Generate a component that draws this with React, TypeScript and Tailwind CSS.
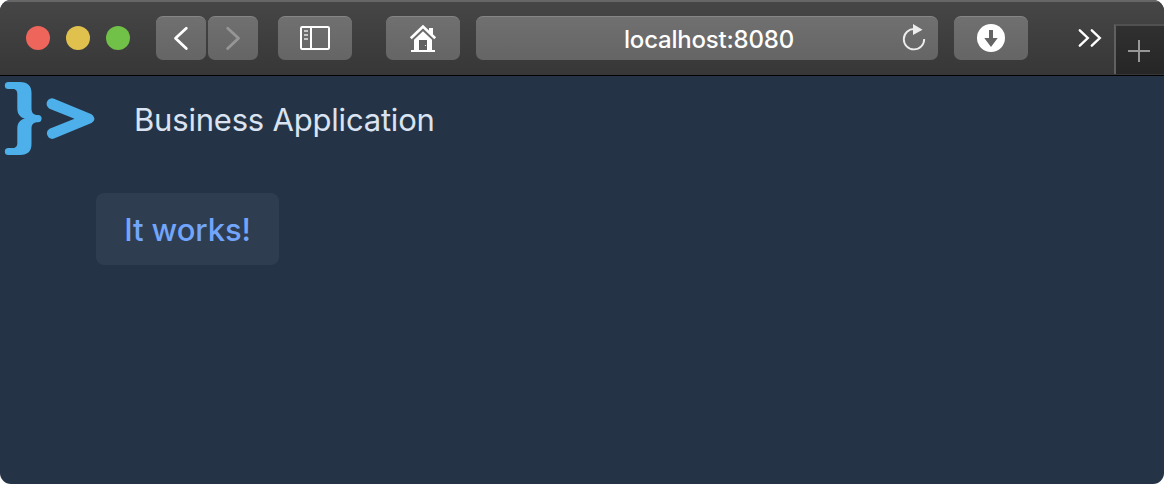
import type { ReactNode } from "react";

function ToolButton({ className, label, children }: { className: string; label: string; children: ReactNode }) {
  return (
    <button
      aria-label={label}
      className={`flex h-11 shrink-0 items-center justify-center rounded-[7px] border-t border-[#858585] bg-linear-to-b from-[#707070] to-[#656565] ${className}`}
    >
      {children}
    </button>
  );
}

function Toolbar() {
  return (
    <header className="flex h-[76px] shrink-0 items-start border-t-2 border-b border-t-[#676767] border-b-black bg-linear-to-b from-[#464646] to-[#373737]">
      <div className="mt-6 ml-[26px] flex gap-4">
        <span className="size-6 rounded-full bg-[#ee655b]" />
        <span className="size-6 rounded-full bg-[#e1c14d]" />
        <span className="size-6 rounded-full bg-[#71c048]" />
      </div>
      <div className="mt-3.5 ml-[26px] flex gap-0.5">
        <ToolButton label="Back" className="w-[50px]">
          <svg width="50" height="43" viewBox="0 0 50 43" fill="none" stroke="#fff" strokeWidth="2.8" strokeLinecap="round" strokeLinejoin="round">
            <path d="M30.3 11.2 19.5 21.200l10.800 10.300" />
          </svg>
        </ToolButton>
        <ToolButton label="Forward" className="w-[50px]">
          <svg width="50" height="43" viewBox="0 0 50 43" fill="none" stroke="#969696" strokeWidth="2.8" strokeLinecap="round" strokeLinejoin="round">
            <path d="m19.700 11.200 10.800 10-10.800 10.300" />
          </svg>
        </ToolButton>
      </div>
      <ToolButton label="Sidebar" className="mt-3.5 ml-5 w-[74px]">
        <svg width="74" height="43" viewBox="0 0 74 43" fill="none" stroke="#fff" strokeWidth="2">
          <rect x="23" y="10" width="28" height="22" rx="1.2" />
          <path d="M33 10v22" />
          <path d="M26 14h4M26 18h4M26 22h4" stroke="#c8c8c8" strokeWidth="1.8" />
        </svg>
      </ToolButton>
      <ToolButton label="Home" className="mt-3.5 ml-[34px] w-[74px]">
        <svg width="74" height="43" viewBox="0 0 74 43">
          <path d="M24.800 21.200 37 9.600l12.200 11.600" fill="none" stroke="#fff" strokeWidth="2.700" />
          <path d="M43 11h4v7.500l-4-3.700z" fill="#fff" />
          <path d="M37 14.200 28 22.700V33h-3v2h24v-2h-3V22.700z" fill="#fff" />
          <path d="M33 23h8v10h-8z" fill="#606060" />
          <circle cx="39.500" cy="28.500" r=".6" fill="#fff" />
        </svg>
      </ToolButton>
      <div className="mt-3.5 ml-4 flex h-11 w-[462px] shrink-0 items-center rounded-[7px] border-t border-[#858585] bg-linear-to-b from-[#707070] to-[#656565]">
        <span className="mt-0.5 ml-[148px] w-[260px] font-['Inter',sans-serif] text-[24px] leading-[30px] font-medium tracking-[-0.2px] whitespace-nowrap text-white">
          localhost:8080
        </span>
        <svg className="ml-4" width="32" height="43" viewBox="0 0 32 43">
          <path d="M14.500 12A10.200 10.200 0 1 0 24.200 22" fill="none" stroke="#ededed" strokeWidth="1.900" />
          <path d="m13 7 9.500 5.700L13 18z" fill="#ededed" />
        </svg>
      </div>
      <ToolButton label="Downloads" className="mt-3.5 ml-4 w-[74px]">
        <svg width="74" height="43" viewBox="0 0 74 43">
          <circle cx="37" cy="21" r="14" fill="#fff" />
          <path d="M35 13h4v8h4.700L37 30l-6.700-9H35z" fill="#656565" />
        </svg>
      </ToolButton>
      <svg className="mt-6 ml-[50px] shrink-0" width="26" height="24" viewBox="0 0 26 24" fill="none" stroke="#fff" strokeWidth="2.400" strokeLinecap="round" strokeLinejoin="miter">
        <path d="m1.800 4.300 8 7.700-8 7.700M13.800 4.300l8 7.700-8 7.700" />
      </svg>
      <div className="mt-[22px] ml-2.5 flex h-[50px] w-[50px] shrink-0 items-center justify-center border-t-2 border-l-2 border-t-[#515151] border-l-[#606060] bg-linear-to-b from-[#303030] to-[#262626]">
        <svg width="48" height="48" viewBox="0 0 48 48" stroke="#979797" strokeWidth="2">
          <path d="M12 25h22M23 14v22" />
        </svg>
      </div>
    </header>
  );
}

export default function App() {
  return (
    <div className="h-[484px] w-[1164px] bg-white">
      <div className="flex h-full flex-col overflow-hidden rounded-[11px] bg-[#253346]">
        <Toolbar />
        <main className="flex-1 font-['Inter',sans-serif]">
          <div className="flex h-[88px] items-center">
            <svg width="96" height="88" viewBox="0 0 96 88" fill="#4db0ea">
              <path d="M8.300 6H20C28 6 31.500 10 31.500 17V32C31.500 36.500 33 39 38 39A3.600 3.600 0 0 1 38 46.200C33 46.200 31.500 48.500 31.500 53V68C31.500 75 28 79 20 79H8.300A3.500 3.500 0 0 1 8.300 72H12.500C15.800 72 17.300 70.500 17.300 67V53C17.300 47.500 19.500 44 25 42.600C19.500 41.200 17.300 37.500 17.300 32V18C17.300 14.500 15.800 13 12.500 13H8.300A3.500 3.500 0 0 1 8.300 6Z" />
              <path d="M54 22.700 91.500 38.300Q97.500 42.600 91.500 47L54 62.600A5.500 5.500 0 0 1 49.500 52.700L74.500 42.700 49.500 32.700A5.500 5.500 0 0 1 54 22.700Z" />
            </svg>
            <h1 className="ml-[38px] text-[31px] leading-10 font-normal tracking-[-0.2px] whitespace-nowrap text-[#d9e3f2]">
              Business Application
            </h1>
          </div>
          <button className="mt-[29px] ml-24 flex h-[72px] w-[183px] items-center justify-center rounded-lg bg-[#2f3d50] pt-px text-[31px] leading-10 font-medium tracking-[-0.1px] whitespace-nowrap text-[#72a5fc]">
            It works!
          </button>
        </main>
      </div>
    </div>
  );
}
